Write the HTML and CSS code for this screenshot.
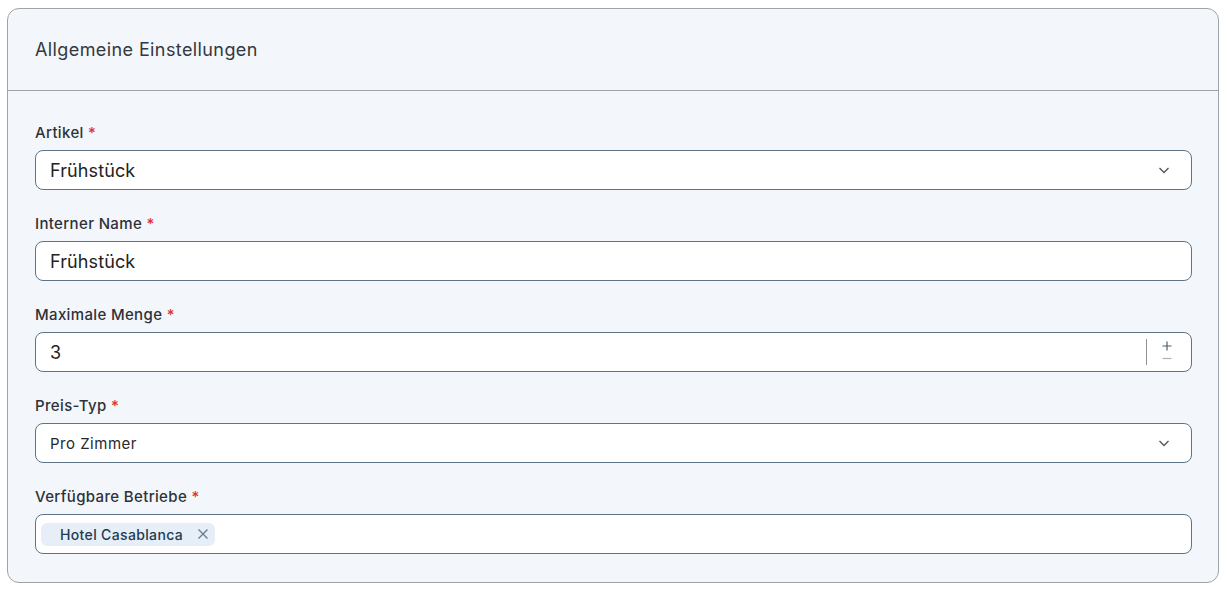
FILE: index.html
```html
<!DOCTYPE html>
<html lang="de">
<head>
  <meta charset="UTF-8" />
  <meta name="viewport" content="width=device-width, initial-scale=1.0"/>
  <title>Allgemeine Einstellungen</title>
  <link rel="stylesheet" href="styles.css">
</head>
<body>
  <div class="card">
    <div class="card-header">Allgemeine Einstellungen</div>
    <div class="card-body">
      <div class="field">
        <label>Artikel <span class="req">*</span></label>
        <div class="control">
          <span class="value big">Frühstück</span>
          <svg class="chevron" width="14" height="14" viewBox="0 0 14 14"><path d="M2.5 5l4.5 4.5L11.5 5" fill="none" stroke="#555" stroke-width="1.3"/></svg>
        </div>
      </div>
      <div class="field">
        <label>Interner Name <span class="req">*</span></label>
        <div class="control">
          <span class="value big">Frühstück</span>
        </div>
      </div>
      <div class="field">
        <label>Maximale Menge <span class="req">*</span></label>
        <div class="control">
          <span class="value big">3</span>
          <div class="stepper">
            <svg width="12" height="26" viewBox="0 0 12 26"><path d="M6 2.5v9M1.5 7h9" stroke="#4b5e6c" stroke-width="1.2"/><path d="M1.5 19.5h9" stroke="#a9b4bd" stroke-width="1.2"/></svg>
          </div>
        </div>
      </div>
      <div class="field">
        <label>Preis-Typ <span class="req">*</span></label>
        <div class="control">
          <span class="value">Pro Zimmer</span>
          <svg class="chevron" width="14" height="14" viewBox="0 0 14 14"><path d="M2.5 5l4.5 4.5L11.5 5" fill="none" stroke="#555" stroke-width="1.3"/></svg>
        </div>
      </div>
      <div class="field">
        <label>Verfügbare Betriebe <span class="req">*</span></label>
        <div class="control tags">
          <span class="chip">Hotel Casablanca
            <svg width="12" height="12" viewBox="0 0 12 12"><path d="M1.5 1.5l9 9M10.5 1.5l-9 9" stroke="#6b7f90" stroke-width="1.4"/></svg>
          </span>
        </div>
      </div>
    </div>
  </div>
</body>
</html>
```

FILE: styles.css
```css
body {
  margin: 0;
  padding: 8px 8px 0 7px;
  font-family: Inter, "Noto Sans", sans-serif;
  color: #2b2f33;
  background: #ffffff;
}
.card {
  background: #f3f6fb;
  border: 1px solid #9ea3a8;
  border-radius: 12px;
  height: 575px;
  box-sizing: border-box;
}
.card-header {
  height: 81px;
  border-bottom: 1px solid #9ea3a8;
  padding-left: 27px;
  display: flex;
  align-items: center;
  font-size: 18px;
  color: #33383d;
  letter-spacing: 0.4px;
}
.card-body {
  padding: 32px 26px 0 27px;
  display: flex;
  flex-direction: column;
  gap: 24px;
}
.field label {
  display: block;
  font-size: 15px;
  font-weight: 500;
  color: #2d3238;
  height: 19px;
  line-height: 19px;
  margin-bottom: 8px;
  letter-spacing: 0.35px;
}
.req {
  color: #e03131;
}
.control {
  height: 40px;
  box-sizing: border-box;
  background: #fff;
  border: 1px solid #5d7486;
  border-radius: 8px;
  display: flex;
  align-items: center;
  padding: 0 14px 0 14px;
}
.value {
  flex: 1;
  font-size: 15px;
  color: #26292c;
  letter-spacing: 0.5px;
}
.value.big {
  font-size: 18px;
  color: #222;
  letter-spacing: 0.1px;
}
.chevron {
  margin-right: 6px;
}
.stepper {
  height: 26px;
  border-left: 1px solid #8c9499;
  padding-left: 14px;
  margin-right: 4px;
  display: flex;
}
.tags {
  padding-left: 5px;
}
.chip {
  background: #e6eef7;
  border-radius: 6px;
  height: 23px;
  padding: 0 6px 0 19px;
  display: flex;
  align-items: center;
  gap: 14px;
  font-size: 14px;
  font-weight: 500;
  color: #1f3a52;
  letter-spacing: 0.35px;
}
```
